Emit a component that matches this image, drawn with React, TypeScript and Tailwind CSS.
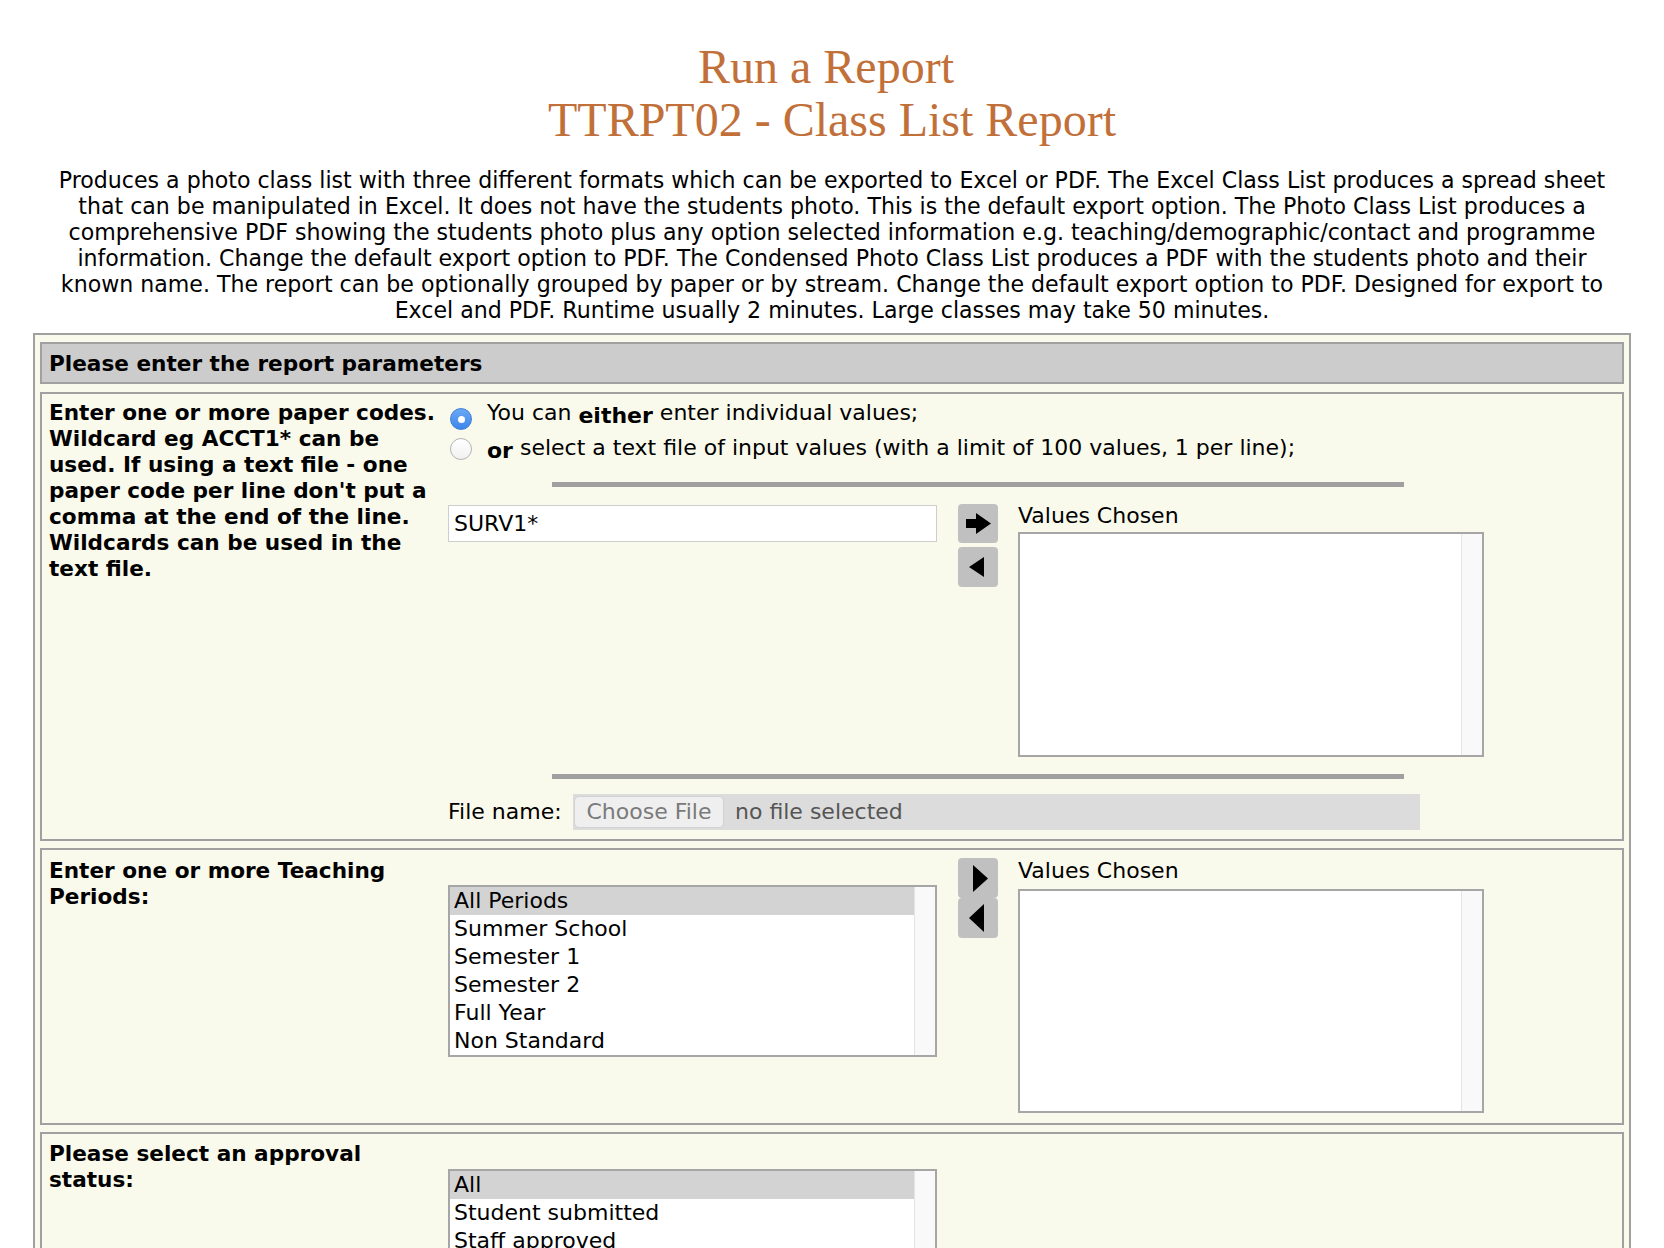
import React from "react";

const lines = [
  "Produces a photo class list with three different formats which can be exported to Excel or PDF. The Excel Class List produces a spread sheet",
  "that can be manipulated in Excel. It does not have the students photo. This is the default export option. The Photo Class List produces a",
  "comprehensive PDF showing the students photo plus any option selected information e.g. teaching/demographic/contact and programme",
  "information. Change the default export option to PDF. The Condensed Photo Class List produces a PDF with the students photo and their",
  "known name. The report can be optionally grouped by paper or by stream. Change the default export option to PDF. Designed for export to",
  "Excel and PDF. Runtime usually 2 minutes. Large classes may take 50 minutes.",
];

function ListBox({
  items,
  selected,
  className,
}: {
  items: string[];
  selected?: number;
  className: string;
}) {
  return (
    <div className={"flex border-2 border-[#a6a6a6] bg-white " + className}>
      <div className="flex-1 overflow-hidden">
        {items.map((it, i) => (
          <div
            key={it}
            className={
              "h-[28px] pl-[4px] leading-[28px] whitespace-nowrap " +
              (i === selected ? "bg-[#d3d3d3]" : "")
            }
          >
            {it}
          </div>
        ))}
      </div>
      <div className="w-[21px] border-l border-[#e4e4e4] bg-[#f9f9f9]" />
    </div>
  );
}

function RightArrowShaft() {
  return (
    <svg width="25" height="21" viewBox="0 0 25 21">
      <path d="M0 6 H10 V0 L25 10.5 L10 21 V15 H0 Z" fill="#000" />
    </svg>
  );
}
function TriLeft({ h = 20 }: { h?: number }) {
  return (
    <svg width="15" height={h} viewBox={`0 0 15 ${h}`}>
      <path d={`M15 0 V${h} L0 ${h / 2} Z`} fill="#000" />
    </svg>
  );
}
function TriRight({ h = 20 }: { h?: number }) {
  return (
    <svg width="15" height={h} viewBox={`0 0 15 ${h}`}>
      <path d={`M0 0 L15 ${h / 2} L0 ${h} Z`} fill="#000" />
    </svg>
  );
}

function ValuesChosen({ listClass }: { listClass: string }) {
  return (
    <div className="flex flex-col">
      <div className="h-[26px] leading-[26px] whitespace-nowrap">Values Chosen</div>
      <div className={"flex border-2 border-[#a6a6a6] bg-white w-[466px] " + listClass}>
        <div className="flex-1" />
        <div className="w-[21px] border-l border-[#e4e4e4] bg-[#f9f9f9]" />
      </div>
    </div>
  );
}

export default function App() {
  return (
    <div className="min-h-screen bg-white font-['DejaVu_Sans',sans-serif] text-[22px] text-black pb-[40px]">
      <div className="pt-[40px] text-center font-['Liberation_Serif',serif] text-[48px] leading-[53px] text-[#c1703a]">
        <div>Run a Report{"\u00a0"}</div>
        <div>TTRPT02 - Class List Report</div>
      </div>
      <div className="mt-[21px] text-center text-[22.1px] leading-[26px]">
        {lines.map((l) => (
          <div key={l} className="whitespace-nowrap">
            {l}
          </div>
        ))}
      </div>

      <div className="mx-[33px] mt-[10px] border-2 border-[#a0a0a0] bg-[#fafaec] px-[5px] pt-[7px] pb-[8px] leading-[26px]">
        <div className="border-2 border-[#a0a0a0] bg-[#cccccc] px-[7px] pt-[7px] pb-[5px] text-[21.6px] font-bold">
          Please enter the report parameters
        </div>

        {/* Section 1 */}
        <div className="mt-[8px] flex border-2 border-[#a0a0a0] pt-[6px] pb-[9px]">
          <div className="w-[406px] shrink-0 pl-[7px] text-[21.6px] font-bold whitespace-nowrap">
            Enter one or more paper codes.
            <br />
            Wildcard eg ACCT1* can be
            <br />
            used. If using a text file - one
            <br />
            paper code per line don't put a
            <br />
            comma at the end of the line.
            <br />
            Wildcards can be used in the
            <br />
            text file.
          </div>
          <div className="flex flex-col">
            <div className="flex items-start">
              <div className="mt-[8px] ml-[2px] flex h-[22px] w-[22px] items-center justify-center rounded-full border border-[#3f7fd8] bg-gradient-to-b from-[#6aa8f5] to-[#3d86ea]">
                <div className="h-[7px] w-[7px] rounded-full bg-white" />
              </div>
              <div className="ml-[15px] whitespace-nowrap">
                You can{" "}
                <span className="relative top-[3px] font-bold">either</span>{" "}
                enter individual values;
              </div>
            </div>
            <div className="mt-[5px] flex items-start">
              <div className="mt-[3px] ml-[2px] h-[22px] w-[22px] rounded-full border border-[#b4b4b4] bg-gradient-to-b from-white to-[#f1f1f1]" />
              <div className="ml-[15px] whitespace-nowrap">
                <span className="relative top-[3px] font-bold">or</span> select
                a text file of input values (with a limit of 100 values, 1 per
                line);
              </div>
            </div>
            <div className="mt-[21px] ml-[104px] h-[5px] w-[852px] bg-[#a0a0a0]" />
            <div className="mt-[16px] flex items-start">
              <div className="mt-[2px] flex h-[37px] w-[489px] items-center border border-[#cdcdcd] bg-white pl-[5px]">
                SURV1*
              </div>
              <div className="ml-[21px] flex flex-col gap-[4px] pt-[1px]">
                <div className="flex h-[39px] w-[40px] items-center justify-center rounded-[4px] bg-[#c0c0c0]">
                  <RightArrowShaft />
                </div>
                <div className="flex h-[40px] w-[40px] items-center justify-center rounded-[4px] bg-[#c0c0c0] pr-[4px]">
                  <TriLeft h={20} />
                </div>
              </div>
              <div className="ml-[20px]">
                <ValuesChosen listClass="mt-[3px] h-[225px]" />
              </div>
            </div>
            <div className="mt-[17px] ml-[104px] h-[5px] w-[852px] bg-[#a0a0a0]" />
            <div className="mt-[15px] flex items-center">
              <div className="w-[125px] whitespace-nowrap">File name:</div>
              <div className="flex h-[36px] w-[847px] items-center bg-[#dcdcdc]">
                <div className="ml-[1px] flex h-[32px] w-[150px] items-center justify-center rounded-[5px] border border-[#d2d2d2] bg-[#efefef] text-[#7a7a7a]">
                  Choose File
                </div>
                <div className="ml-[11px] text-[#555555]">no file selected</div>
              </div>
            </div>
          </div>
        </div>

        {/* Section 2 */}
        <div className="mt-[7px] flex border-2 border-[#a0a0a0] pt-[8px] pb-[10px]">
          <div className="w-[406px] shrink-0 pl-[7px] text-[21.6px] font-bold whitespace-nowrap">
            Enter one or more Teaching
            <br />
            Periods:
          </div>
          <div className="flex items-start">
            <ListBox
              className="mt-[27px] h-[172px] w-[489px]"
              selected={0}
              items={[
                "All Periods",
                "Summer School",
                "Semester 1",
                "Semester 2",
                "Full Year",
                "Non Standard",
              ]}
            />
            <div className="ml-[21px] flex flex-col">
              <div className="flex h-[40px] w-[40px] items-center justify-center rounded-[4px] bg-[#c0c0c0] pl-[4px]">
                <TriRight h={27} />
              </div>
              <div className="flex h-[40px] w-[40px] items-center justify-center rounded-[4px] bg-[#c0c0c0] pr-[4px]">
                <TriLeft h={28} />
              </div>
            </div>
            <div className="ml-[20px]">
              <ValuesChosen listClass="mt-[5px] h-[224px]" />
            </div>
          </div>
        </div>

        {/* Section 3 */}
        <div className="mt-[7px] flex border-2 border-[#a0a0a0] pt-[7px] pb-[10px]">
          <div className="w-[406px] shrink-0 pl-[7px] text-[21.6px] font-bold whitespace-nowrap">
            Please select an approval
            <br />
            status:
          </div>
          <div className="flex items-start">
            <ListBox
              className="mt-[28px] h-[116px] w-[489px]"
              selected={0}
              items={["All", "Student submitted", "Staff approved"]}
            />
          </div>
        </div>
      </div>
    </div>
  );
}
